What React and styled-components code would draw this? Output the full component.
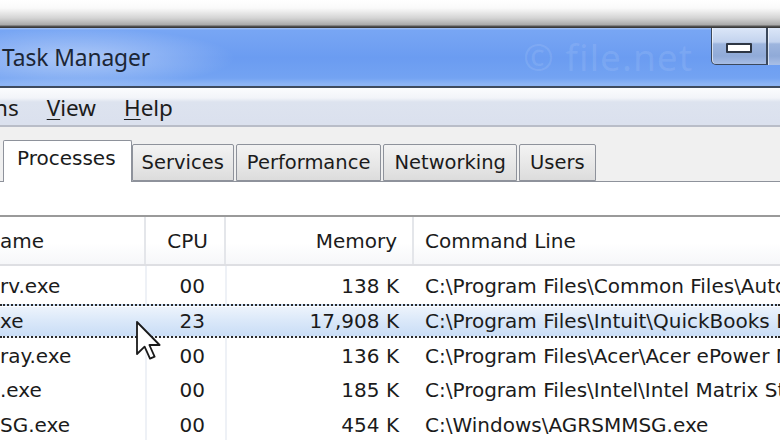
import styled, { createGlobalStyle } from "styled-components";

const GlobalStyle = createGlobalStyle`
    html, body {
        margin: 0;
        padding: 0;
        background: #ffffff;
        overflow: hidden;
    }
    body {
        width: 780px;
        height: 440px;
    }
`;

const rows = [
    { name: "rv.exe", cpu: "00", mem: "138 K", cmd: "C:\\Program Files\\Common Files\\Autodesk Shared\\Service\\AdskScSrv.exe" },
    { name: "xe", cpu: "23", mem: "17,908 K", cmd: "C:\\Program Files\\Intuit\\QuickBooks Enterprise Solutions\\QBW32.exe", selected: true },
    { name: "ray.exe", cpu: "00", mem: "136 K", cmd: "C:\\Program Files\\Acer\\Acer ePower Management\\ePowerTray.exe" },
    { name: ".exe", cpu: "00", mem: "185 K", cmd: "C:\\Program Files\\Intel\\Intel Matrix Storage Manager\\IAAnotif.exe" },
    { name: "SG.exe", cpu: "00", mem: "454 K", cmd: "C:\\Windows\\AGRSMMSG.exe" },
];

const tabs = ["Processes", "Services", "Performance", "Networking", "Users"];

export default function App() {
    return (
        <Screen>
            <GlobalStyle />
            <TopShade />
            <TitleBar>
                <Title>Task Manager</Title>
                <Watermark>© file.net</Watermark>
                <CaptionButtons>
                    <MinButton>
                        <MinGlyph />
                    </MinButton>
                    <MaxButton />
                </CaptionButtons>
            </TitleBar>
            <MenuBar>
                <MenuItem>ns</MenuItem>
                <MenuItem><u>V</u>iew</MenuItem>
                <MenuItem><u>H</u>elp</MenuItem>
            </MenuBar>
            <TabStrip>
                {tabs.map((t, i) => (
                    <Tab key={t} $active={i === 0}>{t}</Tab>
                ))}
            </TabStrip>
            <Panel>
                <ListView>
                    <HeaderRow>
                        <NameCell>ame</NameCell>
                        <CpuCell $header>CPU</CpuCell>
                        <MemCell $header>Memory</MemCell>
                        <CmdCell>Command Line</CmdCell>
                    </HeaderRow>
                    <Body>
                        {rows.map((r) => (
                            <Row key={r.name} $selected={r.selected}>
                                <NameCell>{r.name}</NameCell>
                                <CpuCell>{r.cpu}</CpuCell>
                                <MemCell>{r.mem}</MemCell>
                                <CmdCell>{r.cmd}</CmdCell>
                            </Row>
                        ))}
                    </Body>
                </ListView>
                <Cursor width="26" height="40" viewBox="0 0 13 20">
                    <path
                        d="M0.5 0.5 L0.5 16.5 L4.3 12.8 L7 18.8 L9.3 17.8 L6.7 12 L11.8 12 Z"
                        fill="#ffffff"
                        stroke="#1a1a1a"
                        strokeWidth="0.9"
                        strokeLinejoin="round"
                    />
                </Cursor>
            </Panel>
        </Screen>
    );
}

const Screen = styled.div`
    width: 780px;
    height: 440px;
    display: flex;
    flex-direction: column;
    overflow: hidden;
    background: #ffffff;
    font-family: "DejaVu Sans", "Liberation Sans", sans-serif;
    color: #1b1b1b;
`;

const TopShade = styled.div`
    height: 28px;
    flex-shrink: 0;
    background: linear-gradient(to bottom, #ffffff 0px, #fafafa 8px, #d4d4d4 18px, #a9a9a9 25px, #5a5a5a 26px, #2e2e2e 28px);
`;

const TitleBar = styled.div`
    height: 58px;
    flex-shrink: 0;
    display: flex;
    align-items: flex-start;
    background:
        radial-gradient(ellipse 160px 30px at 75px 30px, rgba(255, 255, 255, 0.45), rgba(255, 255, 255, 0) 100%),
        linear-gradient(to bottom, #a8c4f4 0px, #78a6f4 2px, #6b9cf1 30px, #73a3f2 50px, #8cb4f5 56px);
    border-bottom: 2px solid #3f4b5e;
`;

const Title = styled.div`
    margin: 14px 0 0 2px;
    font-family: "Noto Sans", "Open Sans", sans-serif;
    font-size: 22.8px;
    color: #1c2636;
    letter-spacing: -0.1px;
`;

const Watermark = styled.div`
    margin: 3px 18px 0 auto;
    font-family: "Noto Sans", "Open Sans", sans-serif;
    font-size: 37px;
    color: rgba(255, 255, 255, 0.1);
    letter-spacing: 1px;
    white-space: nowrap;
`;

const CaptionButtons = styled.div`
    display: flex;
    align-self: flex-start;
`;

const MinButton = styled.div`
    width: 56px;
    height: 37px;
    box-sizing: border-box;
    display: flex;
    align-items: center;
    justify-content: center;
    padding-top: 4px;
    border: 1px solid #3b485c;
    border-top: none;
    border-bottom-left-radius: 5px;
    background: linear-gradient(to bottom, #dbe6f8 0px, #c3d3ee 14px, #9db5de 16px, #90aad8 28px, #a9bfe6 37px);
    box-shadow: inset 1px 0 0 rgba(255, 255, 255, 0.6);
`;

const MaxButton = styled.div`
    width: 13px;
    height: 37px;
    box-sizing: border-box;
    border-left: 1px solid #3b485c;
    background: linear-gradient(to bottom, #dbe6f8 0px, #c3d3ee 14px, #9db5de 16px, #90aad8 28px, #a9bfe6 37px);
    box-shadow: inset 1px 0 0 rgba(255, 255, 255, 0.6);
`;

const MinGlyph = styled.div`
    width: 22px;
    height: 6px;
    background: #ffffff;
    border: 2px solid #2e3644;
    border-radius: 1px;
`;

const MenuBar = styled.div`
    height: 36px;
    flex-shrink: 0;
    display: flex;
    align-items: center;
    gap: 28px;
    padding-top: 1px;
    background: linear-gradient(to bottom, #fbfcfe 0px, #f2f4f9 10px, #dde3ef 14px, #dbe1ee 34px);
    border-bottom: 2px solid #b9bdc8;
    font-family: "Noto Sans", "Open Sans", sans-serif;
    font-size: 22.5px;
    color: #1c1c1c;

    & u {
        text-decoration-thickness: 1px;
        text-underline-offset: 3px;
    }
`;

const MenuItem = styled.span`
    white-space: nowrap;
    &:first-child {
        margin-left: -6px;
    }
`;

const TabStrip = styled.div`
    height: 55px;
    flex-shrink: 0;
    display: flex;
    align-items: flex-end;
    padding-left: 3px;
    background: #f0f0f0;
    border-bottom: 1px solid #8e929b;
    box-sizing: border-box;
`;

const Tab = styled.div`
    box-sizing: border-box;
    height: ${(p) => (p.$active ? "42px" : "37px")};
    margin-bottom: ${(p) => (p.$active ? "-1px" : "0")};
    margin-right: 2px;
    padding: ${(p) => (p.$active ? "5px 15px 0 13px" : "6px 10px 0 10px")};
    border: 1px solid #8e929b;
    border-bottom: ${(p) => (p.$active ? "none" : "1px solid #8e929b")};
    border-radius: 2px 2px 0 0;
    background: ${(p) => (p.$active ? "#ffffff" : "linear-gradient(to bottom, #f3f3f3, #e6e6e6 60%, #dcdcdc)")};
    font-size: 19.5px;
    white-space: nowrap;
    color: #1b1b1b;

    &:first-child {
        margin-right: 0;
        font-size: 20px;
    }
    &:nth-child(2) {
        padding: 6px 9px 0 9px;
    }
`;

const Panel = styled.div`
    position: relative;
    flex: 1;
    background: #ffffff;
    padding-top: 33px;
`;

const ListView = styled.div`
    border-top: 2px solid #9a9a9a;
`;

const Columns = styled.div`
    display: grid;
    grid-template-columns: 146px 80px 188px 1fr;
    align-items: center;
`;

const HeaderRow = styled(Columns)`
    height: 47px;
    background: linear-gradient(to bottom, #ffffff 0%, #ffffff 55%, #f6f7f9 100%);
    border-bottom: 2px solid #dedfe3;
    font-size: 20px;

    & > div {
        height: 100%;
        display: flex;
        align-items: center;
    }
    & > div:not(:last-child) {
        border-right: 2px solid #e4e6ea;
    }
`;

const Body = styled.div`
    padding-top: 3px;
    background:
        linear-gradient(to right, transparent 145px, #eef1f6 145px, #eef1f6 147px, transparent 147px, transparent 225px, #eef1f6 225px, #eef1f6 227px, transparent 227px);
`;

const Row = styled(Columns)`
    height: 34.7px;
    box-sizing: border-box;
    font-size: 20px;
    white-space: nowrap;
    ${(p) =>
        p.$selected &&
        `
        background: linear-gradient(to bottom, #eef4fc 0%, #dae8f9 50%, #c9ddf6 100%);
        border-top: 2px dotted #2a2a2a;
        border-bottom: 2px dotted #2a2a2a;
        box-shadow: inset 0 1px 0 #ffffff;
    `}
`;

const NameCell = styled.div`
    padding-left: 0;
    overflow: hidden;
`;

const CpuCell = styled.div`
    justify-content: flex-end;
    text-align: right;
    padding-right: ${(p) => (p.$header ? "16px" : "21px")};
`;

const MemCell = styled.div`
    justify-content: flex-end;
    text-align: right;
    padding-right: 15px;
`;

const CmdCell = styled.div`
    padding-left: 11px;
    overflow: hidden;
    white-space: nowrap;
`;

const Cursor = styled.svg`
    position: absolute;
    left: 136px;
    top: 139px;
    pointer-events: none;
`;
